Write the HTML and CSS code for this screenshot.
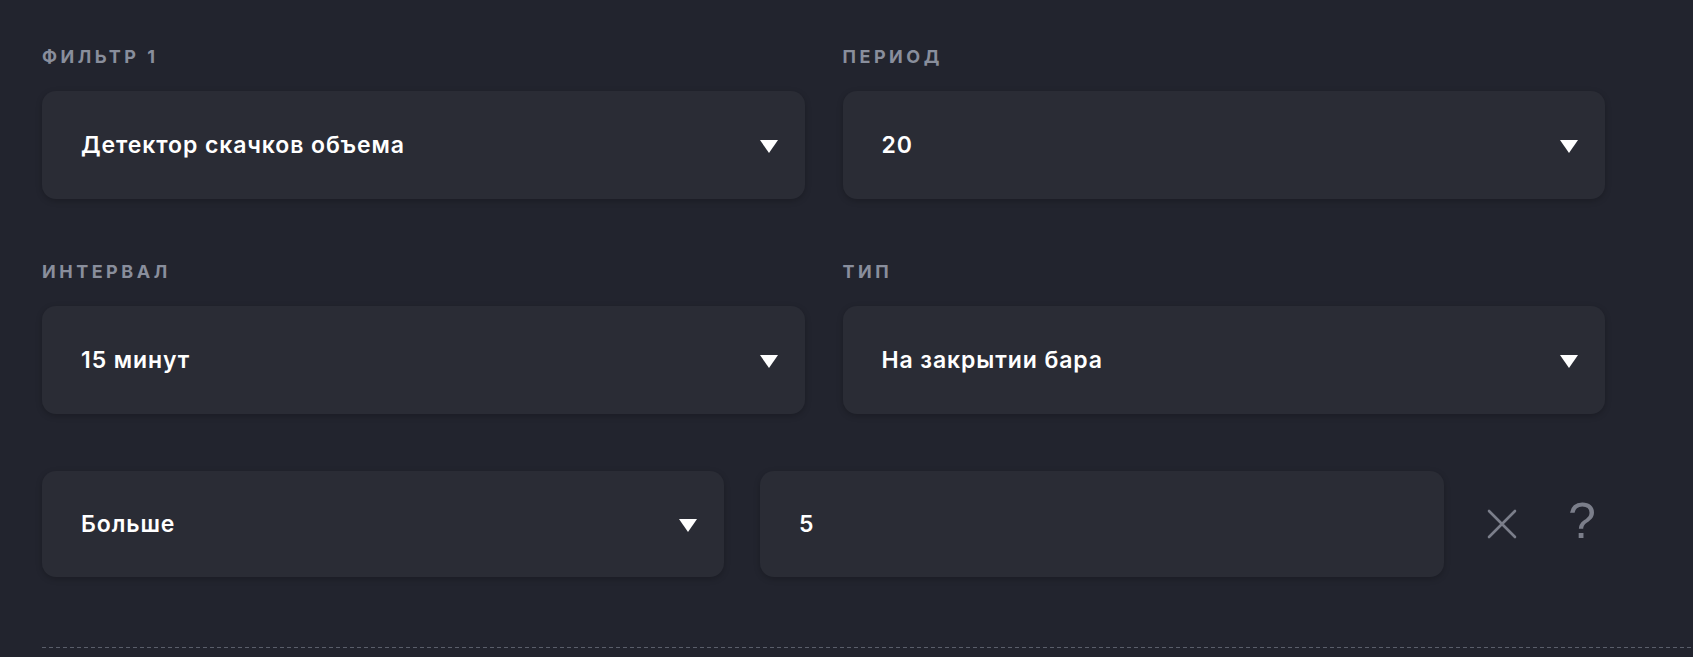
FILE: index.html
```html
<!DOCTYPE html>
<html lang="ru">
<head>
<meta charset="utf-8">
<title>Фильтр</title>
<link rel="stylesheet" href="styles.css">
</head>
<body>
<div class="panel">
  <div class="grid">
    <div class="field">
      <div class="label">Фильтр 1</div>
      <div class="select"><span class="value">Детектор скачков объема</span><span class="caret"></span></div>
    </div>
    <div class="field">
      <div class="label">Период</div>
      <div class="select"><span class="value">20</span><span class="caret"></span></div>
    </div>
    <div class="field">
      <div class="label">Интервал</div>
      <div class="select"><span class="value">15 минут</span><span class="caret"></span></div>
    </div>
    <div class="field">
      <div class="label">Тип</div>
      <div class="select"><span class="value">На закрытии бара</span><span class="caret"></span></div>
    </div>
  </div>
  <div class="condition">
    <div class="select short"><span class="value">Больше</span><span class="caret"></span></div>
    <div class="select short input"><span class="value">5</span></div>
    <div class="actions">
      <span class="icon-x"><svg width="30" height="30" viewBox="0 0 30 30"><path d="M2 2 L28 28 M28 2 L2 28" stroke="#7b7e8a" stroke-width="2.6" stroke-linecap="round" fill="none"/></svg></span>
      <span class="icon-q">?</span>
    </div>
  </div>
  <div class="divider"></div>
</div>
</body>
</html>
```
FILE: styles.css
```css
html, body {
  margin: 0;
  padding: 0;
}
body {
  background: #22242e;
  font-family: Inter, Roboto, "Noto Sans", sans-serif;
  color: #ffffff;
  height: 657px;
  overflow: hidden;
}
.panel {
  padding: 47px 88px 0 42px;
}
.grid {
  display: grid;
  grid-template-columns: 1fr 1fr;
  column-gap: 38px;
  row-gap: 63px;
}
.label {
  font-size: 18px;
  line-height: 20px;
  font-weight: 700;
  letter-spacing: 3.5px;
  text-transform: uppercase;
  color: #898e9c;
  margin-bottom: 24px;
}
.select {
  height: 108px;
  box-sizing: border-box;
  background: #2a2c35;
  border-radius: 14px;
  box-shadow: 0 2px 6px rgba(0, 0, 0, 0.22);
  display: flex;
  align-items: center;
  justify-content: space-between;
  padding: 0 27px 0 39px;
}
.value {
  font-size: 23px;
  font-weight: 600;
  letter-spacing: 0.9px;
  color: #ffffff;
}
.caret {
  width: 0;
  height: 0;
  border-left: 9px solid transparent;
  border-right: 9px solid transparent;
  border-top: 13px solid #ffffff;
  margin-top: 2px;
}
.condition {
  display: flex;
  align-items: center;
  margin-top: 57px;
}
.select.short {
  height: 106px;
  width: 682px;
  flex: none;
}
.select.input {
  width: 684px;
  margin-left: 36px;
}
.actions {
  display: flex;
  align-items: center;
  margin-left: 43px;
}
.icon-x {
  display: flex;
  width: 31px;
  height: 31px;
}
.icon-q {
  margin-left: 50px;
  margin-top: -6px;
  font-family: "Liberation Sans", Arial, sans-serif;
  font-size: 50px;
  line-height: 50px;
  font-weight: 400;
  color: #7b7e8a;
}
.divider {
  margin-top: 70px;
  margin-right: -88px;
  height: 1px;
  background-image: repeating-linear-gradient(to right, #5a5e6a 0 4px, transparent 4px 7px);
}
```
